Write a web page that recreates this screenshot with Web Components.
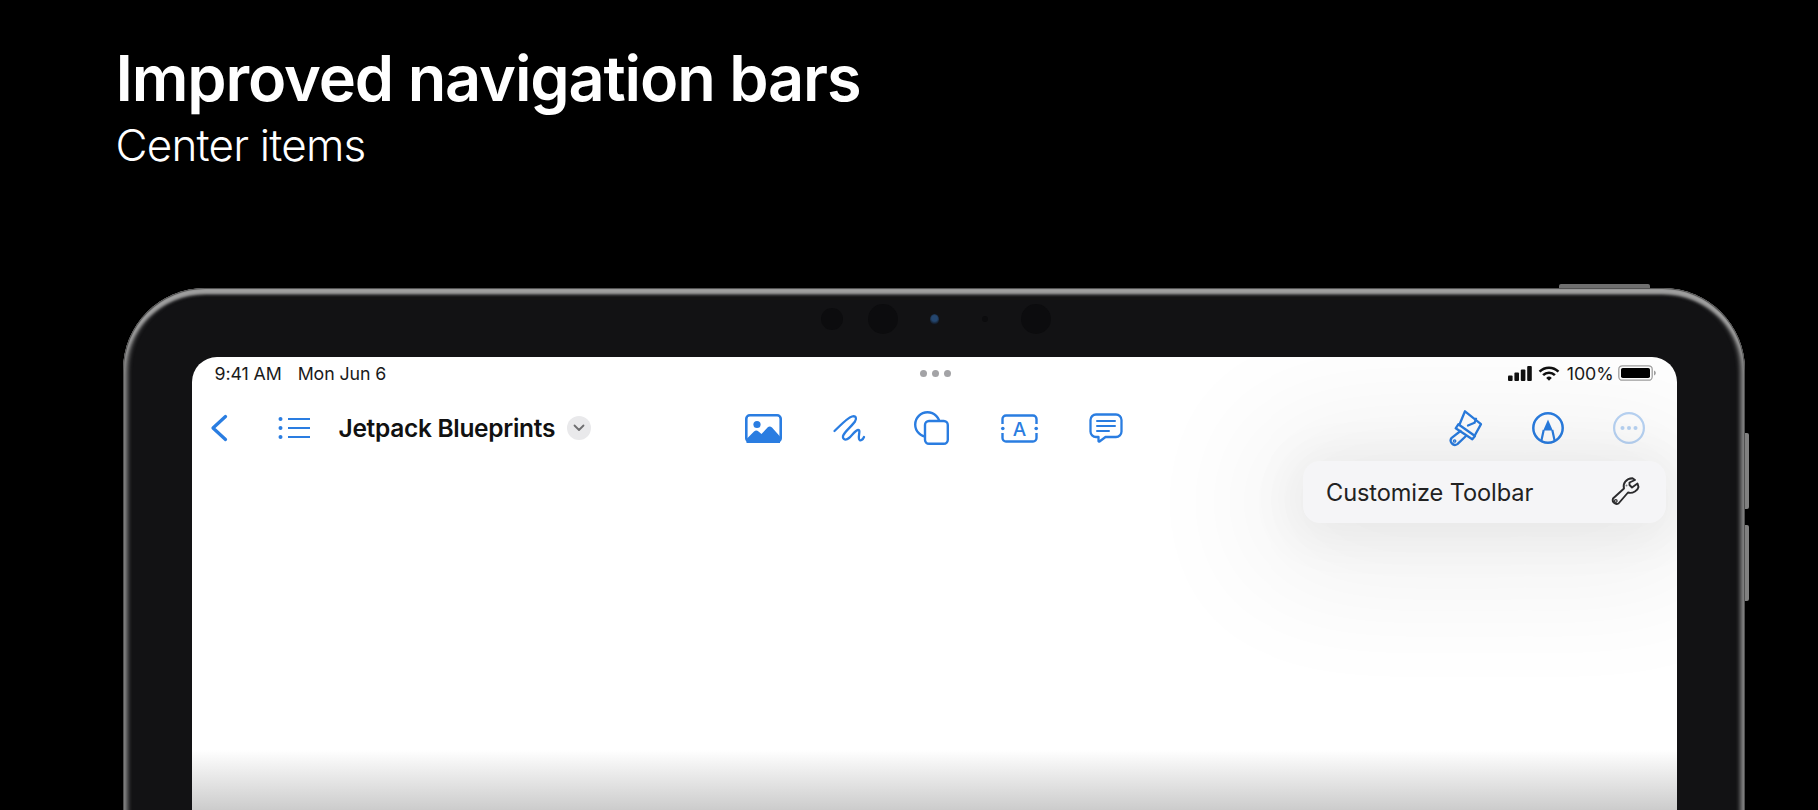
<!DOCTYPE html>
<html lang="en">
<head>
<meta charset="utf-8">
<title>Improved navigation bars</title>
<style>
  html, body { margin: 0; height: 810px; overflow: hidden; background: #000; }
  body { font-family: Inter, "Liberation Sans", sans-serif; }
</style>
</head>
<body>
<slide-title>
  Improved navigation bars
  <span slot="sub">Center items</span>
</slide-title>
<ipad-device>
  <status-bar></status-bar>
  <nav-toolbar>
    <tool-icon slot="left" name="back"></tool-icon>
    <tool-icon slot="left" name="list" style="margin-left:50px"></tool-icon>
    <doc-title slot="left">Jetpack Blueprints</doc-title>
    <tool-icon name="photo"></tool-icon>
    <tool-icon name="scribble"></tool-icon>
    <tool-icon name="shapes" style="margin:0 1px 0 -2px"></tool-icon>
    <tool-icon name="textbox"></tool-icon>
    <tool-icon name="comment"></tool-icon>
    <tool-icon slot="right" name="brush"></tool-icon>
    <tool-icon slot="right" name="pencil"></tool-icon>
    <tool-icon slot="right" name="more"></tool-icon>
  </nav-toolbar>
  <popover-menu>Customize Toolbar</popover-menu>
</ipad-device>

<script>
const ICONS = {
  back: [18, 28, `<path d="M15.500 2.500 3 14l12.500 11.500" fill="none" stroke="currentColor" stroke-width="3.300" stroke-linecap="round" stroke-linejoin="round"/>`],
  list: [32, 24, `<g fill="currentColor"><circle cx="2.500" cy="3" r="2"/><circle cx="2.500" cy="12" r="2"/><circle cx="2.500" cy="21" r="2"/></g><path d="M10 3h22M10 12h22M10 21h22" stroke="currentColor" stroke-width="2.200"/>`],
  photo: [37, 29, `<rect x="1.300" y="1.300" width="34.400" height="26.400" rx="3.500" fill="none" stroke="currentColor" stroke-width="2.600"/><circle cx="12" cy="10.500" r="3.600" fill="currentColor"/><path d="M1.500 25 9 17.500c1.500-1.300 3-1.300 4.500 0l3 2.500 6-6.500c1.500-1.400 3-1.400 4.500 0l8 9V29H1.500z" fill="currentColor"/>`],
  scribble: [32, 28, `<path d="M1.500 17C7 12 14 4 19 2.500c4-1 5 1.500 3 5C19 12 11 18 10 22c-.5 4 3 4.500 6 2 3-2.500 6-7.500 9-8 3-.5 0 6 1 9 1 3 4 .5 5-2" fill="none" stroke="currentColor" stroke-width="2.300" stroke-linecap="round" stroke-linejoin="round"/>`],
  shapes: [35, 34, `<g fill="none" stroke="currentColor" stroke-width="2.400"><circle cx="13.500" cy="13.500" r="12.300"/><rect x="11" y="10" width="22.800" height="22.800" rx="4" fill="#fff"/></g>`],
  textbox: [37, 29, `<path d="M1.500 10V5A3.500 3.500 0 0 1 5 1.500h27A3.500 3.500 0 0 1 35.500 5v5M1.500 19v5A3.500 3.500 0 0 0 5 27.500h27a3.500 3.500 0 0 0 3.500-3.500v-5" fill="none" stroke="currentColor" stroke-width="2.400"/><circle cx="1.800" cy="14.500" r="1.800" fill="currentColor"/><circle cx="35.200" cy="14.500" r="1.800" fill="currentColor"/><text x="18.500" y="21.500" text-anchor="middle" font-family="Inter, sans-serif" font-size="19" font-weight="500" fill="currentColor">A</text>`],
  comment: [34, 30, `<path d="M7 1.500h20a5.500 5.500 0 0 1 5.500 5.500v11.500a5.500 5.500 0 0 1-5.500 5.500H16.500l-6 4.500c-.5.300-1 0-1-.500V24H7a5.500 5.500 0 0 1-5.500-5.500V7A5.500 5.500 0 0 1 7 1.500z" fill="none" stroke="currentColor" stroke-width="2.300" stroke-linejoin="round"/><path d="M8 8h18M8 13h18M8 18h12" stroke="currentColor" stroke-width="2" stroke-linecap="round"/>`],
  brush: [33, 36, `<g fill="none" stroke="currentColor" stroke-width="2.300" stroke-linejoin="round" stroke-linecap="round"><path d="M10.500 14.500 16 1.300l16 12.800-6 10.900"/><path d="M19 15.500l6.500-2.700 1.500-4"/><path d="M9.300 14.300 26 26l-2.700 3.300L6.700 18.300z"/><path d="M11.500 21 2.700 27.800a4.300 4.300 0 0 0 5.700 6.300L17 26"/><circle cx="5.600" cy="31" r=".7"/></g>`],
  pencil: [32, 32, `<circle cx="16" cy="16" r="14.700" fill="none" stroke="currentColor" stroke-width="2.500"/><path d="M16 7.500 20.800 18.500h-9.600z" fill="currentColor"/><path d="M11.700 18 9.300 29M20.300 18l2.400 11" fill="none" stroke="currentColor" stroke-width="2.200"/>`],
  more: [32, 32, `<g opacity=".32"><circle cx="16" cy="16" r="14.900" fill="none" stroke="currentColor" stroke-width="2.200"/><g fill="currentColor"><circle cx="9.500" cy="16" r="2"/><circle cx="16" cy="16" r="2"/><circle cx="22.500" cy="16" r="2"/></g></g>`],
  wrench: [28, 30, `<path d="M2 21.500 13 11.500C11.500 6.500 15 1.500 21.500 1.200L24 3l-5.500 2.500V8l2.500 2.500 5.500-4 1 3.500C27 13 22 17 17 15.500L7.500 26.500a4 4 0 0 1-5.500-5z" fill="none" stroke="currentColor" stroke-width="1.900" stroke-linejoin="round"/><circle cx="4.800" cy="24" r="1.300" fill="none" stroke="currentColor" stroke-width="1.200"/><circle cx="15.500" cy="8.500" r="1" fill="currentColor" opacity=".6"/>`]
};

class SlideTitle extends HTMLElement {
  static get template() {
    const template = document.createElement("template");
    template.innerHTML = `
      <style>
        :host { display: block; height: 288px; padding: 41px 0 0 115.500px; box-sizing: border-box; color: #fff; }
        h1 { margin: 0; font: 600 63px/74px Inter, "Liberation Sans", sans-serif; letter-spacing: -1.150px; }
        p { margin: 2px 0 0; font: 300 44px/56px Inter, "Liberation Sans", sans-serif; letter-spacing: -0.8px; }
      </style>
      <h1><slot></slot></h1>
      <p><slot name="sub"></slot></p>
    `;
    return template;
  }
  constructor() {
    super();
    this.attachShadow({ mode: "open" });
    this.shadowRoot.appendChild(SlideTitle.template.content.cloneNode(true));
  }
}

class IpadDevice extends HTMLElement {
  static get template() {
    const template = document.createElement("template");
    template.innerHTML = `
      <style>
        :host {
          display: block; position: relative; box-sizing: border-box;
          width: 1622px; height: 760px; margin-left: 123px;
          padding: 0 68.500px;
          background: #121214; border-radius: 82px 82px 0 0;
          box-shadow: inset 0 0 1px 1px #4a4a4a, inset 0 5px 3px 1px #a0a0a0, inset 0 0 4px 5px #7a7a7a;
        }
        .volume, .top-button { position: absolute; background: #808080; }
        .top-button { left: 1436px; top: -4px; width: 91px; height: 4px; border-radius: 2px 2px 0 0; background: #6f6f6f; }
        .volume { left: 100%; width: 4px; border-radius: 0 2px 2px 0; }
        .up { top: 145px; height: 76px; }
        .down { top: 237px; height: 76px; }
        .cameras { display: grid; grid-template-columns: repeat(5, 51px); justify-content: center; align-items: center; justify-items: center; height: 68.500px; padding-bottom: 6px; box-sizing: border-box; }
        .cameras i { display: block; border-radius: 50%; background: #0c0c0e; }
        .cameras .sensor { width: 9px; height: 11px; background: radial-gradient(circle at 50% 40%, #24466f 0 35%, #10131a 75%); }
        .screen { position: relative; height: 640px; overflow: hidden; border-radius: 25px 25px 0 0; background: linear-gradient(#fff 393px, #cbcbcb 454px); color: #000; }
      </style>
      <div class="top-button"></div>
      <div class="volume up"></div>
      <div class="volume down"></div>
      <div class="cameras">
        <i style="width:22px;height:22px"></i>
        <i style="width:30px;height:30px"></i>
        <i class="sensor"></i>
        <i style="width:6px;height:6px"></i>
        <i style="width:30px;height:30px"></i>
      </div>
      <div class="screen"><slot></slot></div>
    `;
    return template;
  }
  constructor() {
    super();
    this.attachShadow({ mode: "open" });
    this.shadowRoot.appendChild(IpadDevice.template.content.cloneNode(true));
  }
}

class StatusBar extends HTMLElement {
  static get template() {
    const template = document.createElement("template");
    template.innerHTML = `
      <style>
        :host {
          display: grid; grid-template-columns: 1fr auto 1fr; align-items: center;
          height: 33px; padding: 0 21px 0 23px;
          font: 400 17.800px Inter, "Liberation Sans", sans-serif; letter-spacing: -0.1px; color: #1a1a1a;
        }
        .left { display: flex; gap: 16px; }
        .dots { display: flex; gap: 5px; }
        .dots i { width: 7px; height: 7px; border-radius: 50%; background: #a3a3a6; }
        .right { display: flex; justify-content: flex-end; align-items: center; gap: 6px; }
        .pct { margin: 0 -2px 0 1px; }
        svg { display: block; }
      </style>
      <div class="left"><span>9:41 AM</span><span>Mon Jun 6</span></div>
      <div class="dots"><i></i><i></i><i></i></div>
      <div class="right">
        <svg width="24" height="15" viewBox="0 0 24 15" fill="#111"><rect x="0" y="9.500" width="4.600" height="5.500" rx="1"/><rect x="6.400" y="6.500" width="4.600" height="8.500" rx="1"/><rect x="12.800" y="3.500" width="4.600" height="11.500" rx="1"/><rect x="19.200" y="0" width="4.600" height="15" rx="1"/></svg>
        <svg width="22" height="15" viewBox="0 0 20 14" fill="none" stroke="#111" stroke-width="2.400"><path d="M1.200 5.200a12.500 12.500 0 0 1 17.600 0"/><path d="M4.500 8.500a7.800 7.800 0 0 1 11 0"/><path d="M10 13.800 7.400 11.200a3.700 3.700 0 0 1 5.200 0z" fill="#111" stroke="none"/></svg>
        <span class="pct">100%</span>
        <svg width="38" height="16" viewBox="0 0 38 16"><rect x=".8" y=".8" width="33.400" height="14.400" rx="3.500" fill="none" stroke="#a0a0a0" stroke-width="1.300"/><rect x="3" y="3" width="29" height="10" rx="1.800" fill="#000"/><path d="M36 5.500c1.200.400 1.800 1.300 1.800 2.500s-.6 2.100-1.800 2.500z" fill="#a0a0a0"/></svg>
      </div>
    `;
    return template;
  }
  constructor() {
    super();
    this.attachShadow({ mode: "open" });
    this.shadowRoot.appendChild(StatusBar.template.content.cloneNode(true));
  }
}

class NavToolbar extends HTMLElement {
  static get template() {
    const template = document.createElement("template");
    template.innerHTML = `
      <style>
        :host {
          display: grid; grid-template-columns: 1fr auto 1fr; align-items: center;
          height: 77px; padding: 0 18px; color: #2a7de1;
        }
        .left { display: flex; align-items: center; }
        .center { display: flex; align-items: center; gap: 51px; }
        .right { display: flex; justify-content: flex-end; align-items: center; gap: 49.500px; margin-right: 13.500px; }
      </style>
      <div class="left"><slot name="left"></slot></div>
      <div class="center"><slot></slot></div>
      <div class="right"><slot name="right"></slot></div>
    `;
    return template;
  }
  constructor() {
    super();
    this.attachShadow({ mode: "open" });
    this.shadowRoot.appendChild(NavToolbar.template.content.cloneNode(true));
  }
}

class ToolIcon extends HTMLElement {
  static get observedAttributes() {
    return ["name"];
  }
  constructor() {
    super();
    this.attachShadow({ mode: "open" });
  }
  connectedCallback() {
    this.render();
  }
  attributeChangedCallback() {
    this.render();
  }
  render() {
    const [w, h, body] = ICONS[this.getAttribute("name")] || [0, 0, ""];
    this.shadowRoot.innerHTML = `
      <style>
        :host { display: block; line-height: 0; }
        svg { display: block; overflow: visible; }
      </style>
      <svg width="${w}" height="${h}" viewBox="0 0 ${w} ${h}">${body}</svg>
    `;
  }
}

class DocTitle extends HTMLElement {
  static get template() {
    const template = document.createElement("template");
    template.innerHTML = `
      <style>
        :host {
          display: flex; align-items: center; gap: 12px; margin-left: 29px;
          font: 600 24.500px Inter, "Liberation Sans", sans-serif; letter-spacing: -0.3px; color: #111;
        }
        .caret { display: grid; place-items: center; width: 24px; height: 24px; border-radius: 50%; background: #e9e9eb; }
        svg { display: block; }
      </style>
      <slot></slot>
      <span class="caret"><svg width="12" height="8" viewBox="0 0 12 8"><path d="M1.500 1.500 6 6l4.500-4.500" fill="none" stroke="#6e6e70" stroke-width="1.800" stroke-linecap="round" stroke-linejoin="round"/></svg></span>
    `;
    return template;
  }
  constructor() {
    super();
    this.attachShadow({ mode: "open" });
    this.shadowRoot.appendChild(DocTitle.template.content.cloneNode(true));
  }
}

class PopoverMenu extends HTMLElement {
  static get template() {
    const template = document.createElement("template");
    template.innerHTML = `
      <style>
        :host {
          position: absolute; right: 10.500px; top: 104.500px; box-sizing: border-box;
          display: flex; align-items: center; justify-content: space-between;
          width: 363px; height: 62px; padding: 0 27px 0 23px;
          background: #f5f5f7; border-radius: 17px;
          font: 400 23.600px Inter, "Liberation Sans", sans-serif; letter-spacing: -0.1px; color: #222;
          box-shadow: 0 6px 50px 10px rgba(0, 0, 0, .05), 0 10px 130px 50px rgba(0, 0, 0, .06);
        }
      </style>
      <slot></slot>
      <tool-icon name="wrench" style="color:#2b2b2d"></tool-icon>
    `;
    return template;
  }
  constructor() {
    super();
    this.attachShadow({ mode: "open" });
    this.shadowRoot.appendChild(PopoverMenu.template.content.cloneNode(true));
  }
}

customElements.define("slide-title", SlideTitle);
customElements.define("ipad-device", IpadDevice);
customElements.define("status-bar", StatusBar);
customElements.define("nav-toolbar", NavToolbar);
customElements.define("tool-icon", ToolIcon);
customElements.define("doc-title", DocTitle);
customElements.define("popover-menu", PopoverMenu);
</script>
</body>
</html>
